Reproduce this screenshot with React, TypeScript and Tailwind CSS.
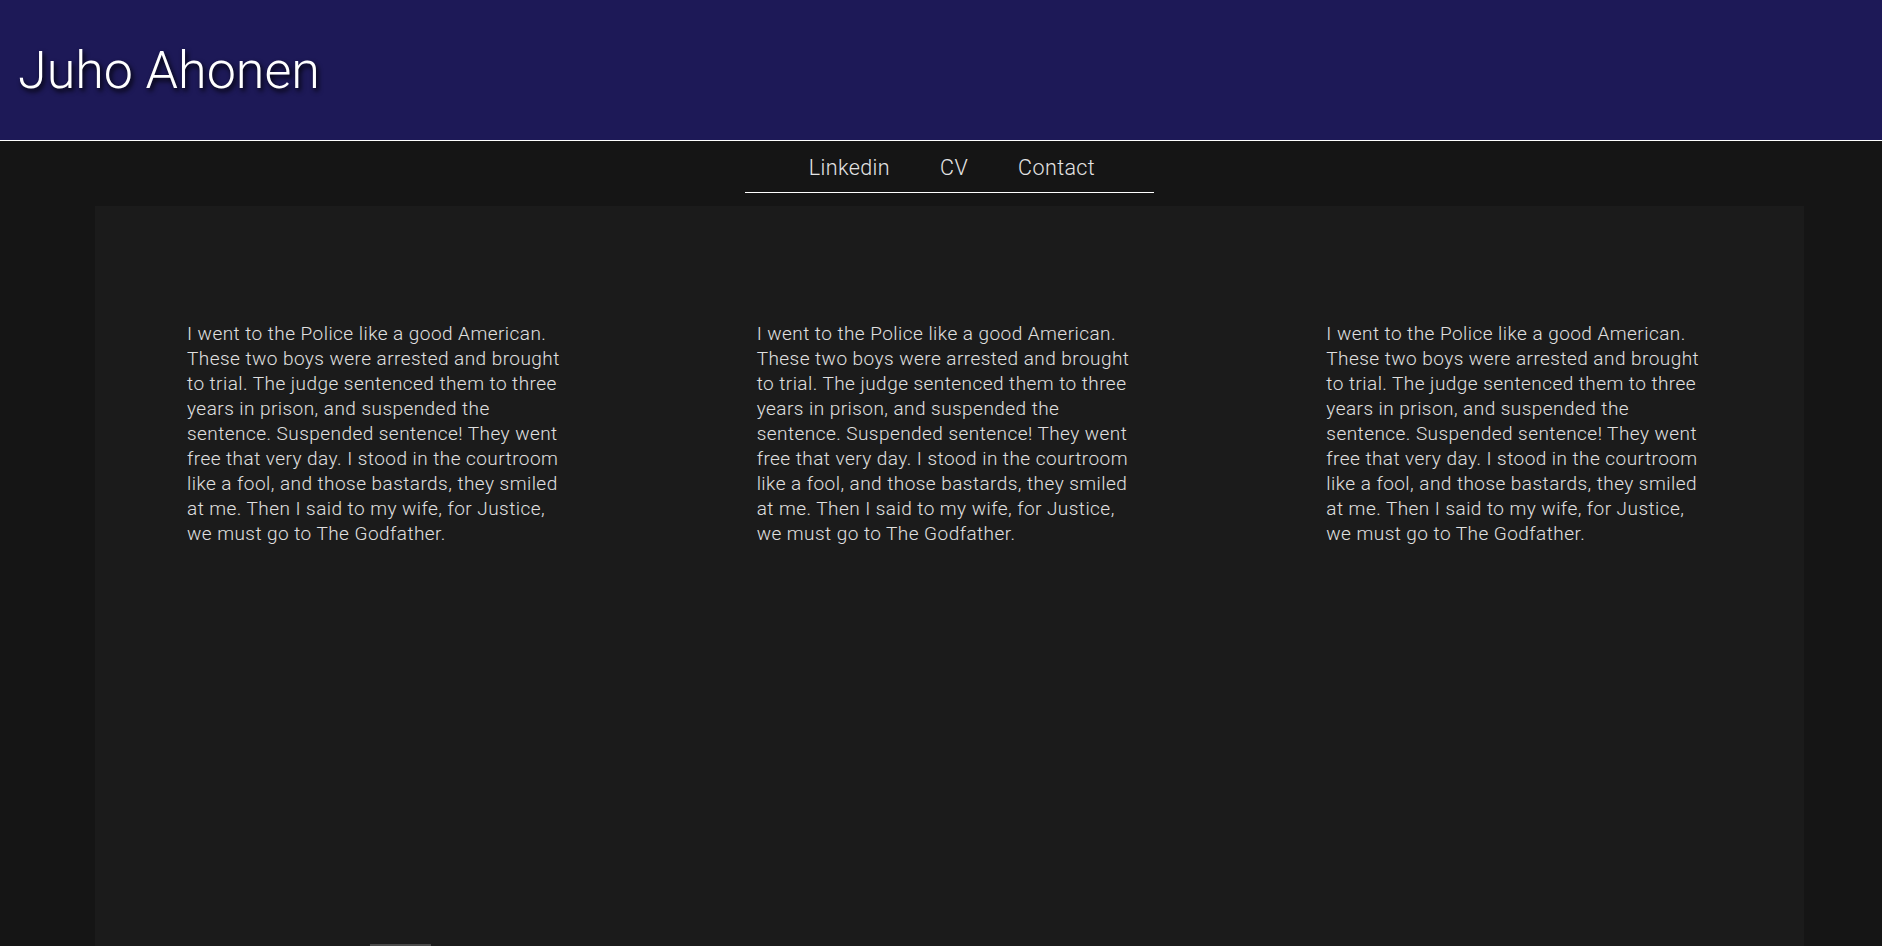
const story =
  "I went to the Police like a good American. These two boys were arrested and brought to trial. The judge sentenced them to three years in prison, and suspended the sentence. Suspended sentence! They went free that very day. I stood in the courtroom like a fool, and those bastards, they smiled at me. Then I said to my wife, for Justice, we must go to The Godfather.";

function App() {
    return (
        <div className="min-h-screen bg-[#151515] font-['Roboto',sans-serif] font-light text-[#e0e0e0]">
            <header className="h-[141px] bg-[#1d1957] border-b border-white flex items-center px-[18px]">
                <h1 className="text-[52px] leading-none text-white [text-shadow:2px_3px_5px_#000] pt-[2px]">
                    Juho Ahonen
                </h1>
            </header>

            <nav className="flex justify-center">
                <ul className="ml-[17px] w-[409px] h-[52px] pt-[4px] pl-[5px] border-b border-white flex items-center justify-center gap-[50px] text-[21.5px] tracking-[0.4px] text-[#e4e4e4]">
                    <li><a href="#linkedin">Linkedin</a></li>
                    <li><a href="#cv">CV</a></li>
                    <li><a href="#contact">Contact</a></li>
                </ul>
            </nav>

            <main className="mt-[13px] ml-[95px] w-[1709px] bg-[#1b1b1b] pt-[115px]">
                <div className="grid grid-cols-3">
                    {[0, 1, 2].map(i => (
                        <div key={i} className="pl-[92px]">
                            <p className="w-[380px] text-[19px] leading-[25px] tracking-[0.45px]">
                                {story}
                            </p>
                        </div>
                    ))}
                </div>
                <div className="h-[398px]"></div>
                <div className="ml-[275px] w-[61px] h-[2px] bg-[#4a4a4a]"></div>
            </main>
        </div>
    )
}

export default App;
